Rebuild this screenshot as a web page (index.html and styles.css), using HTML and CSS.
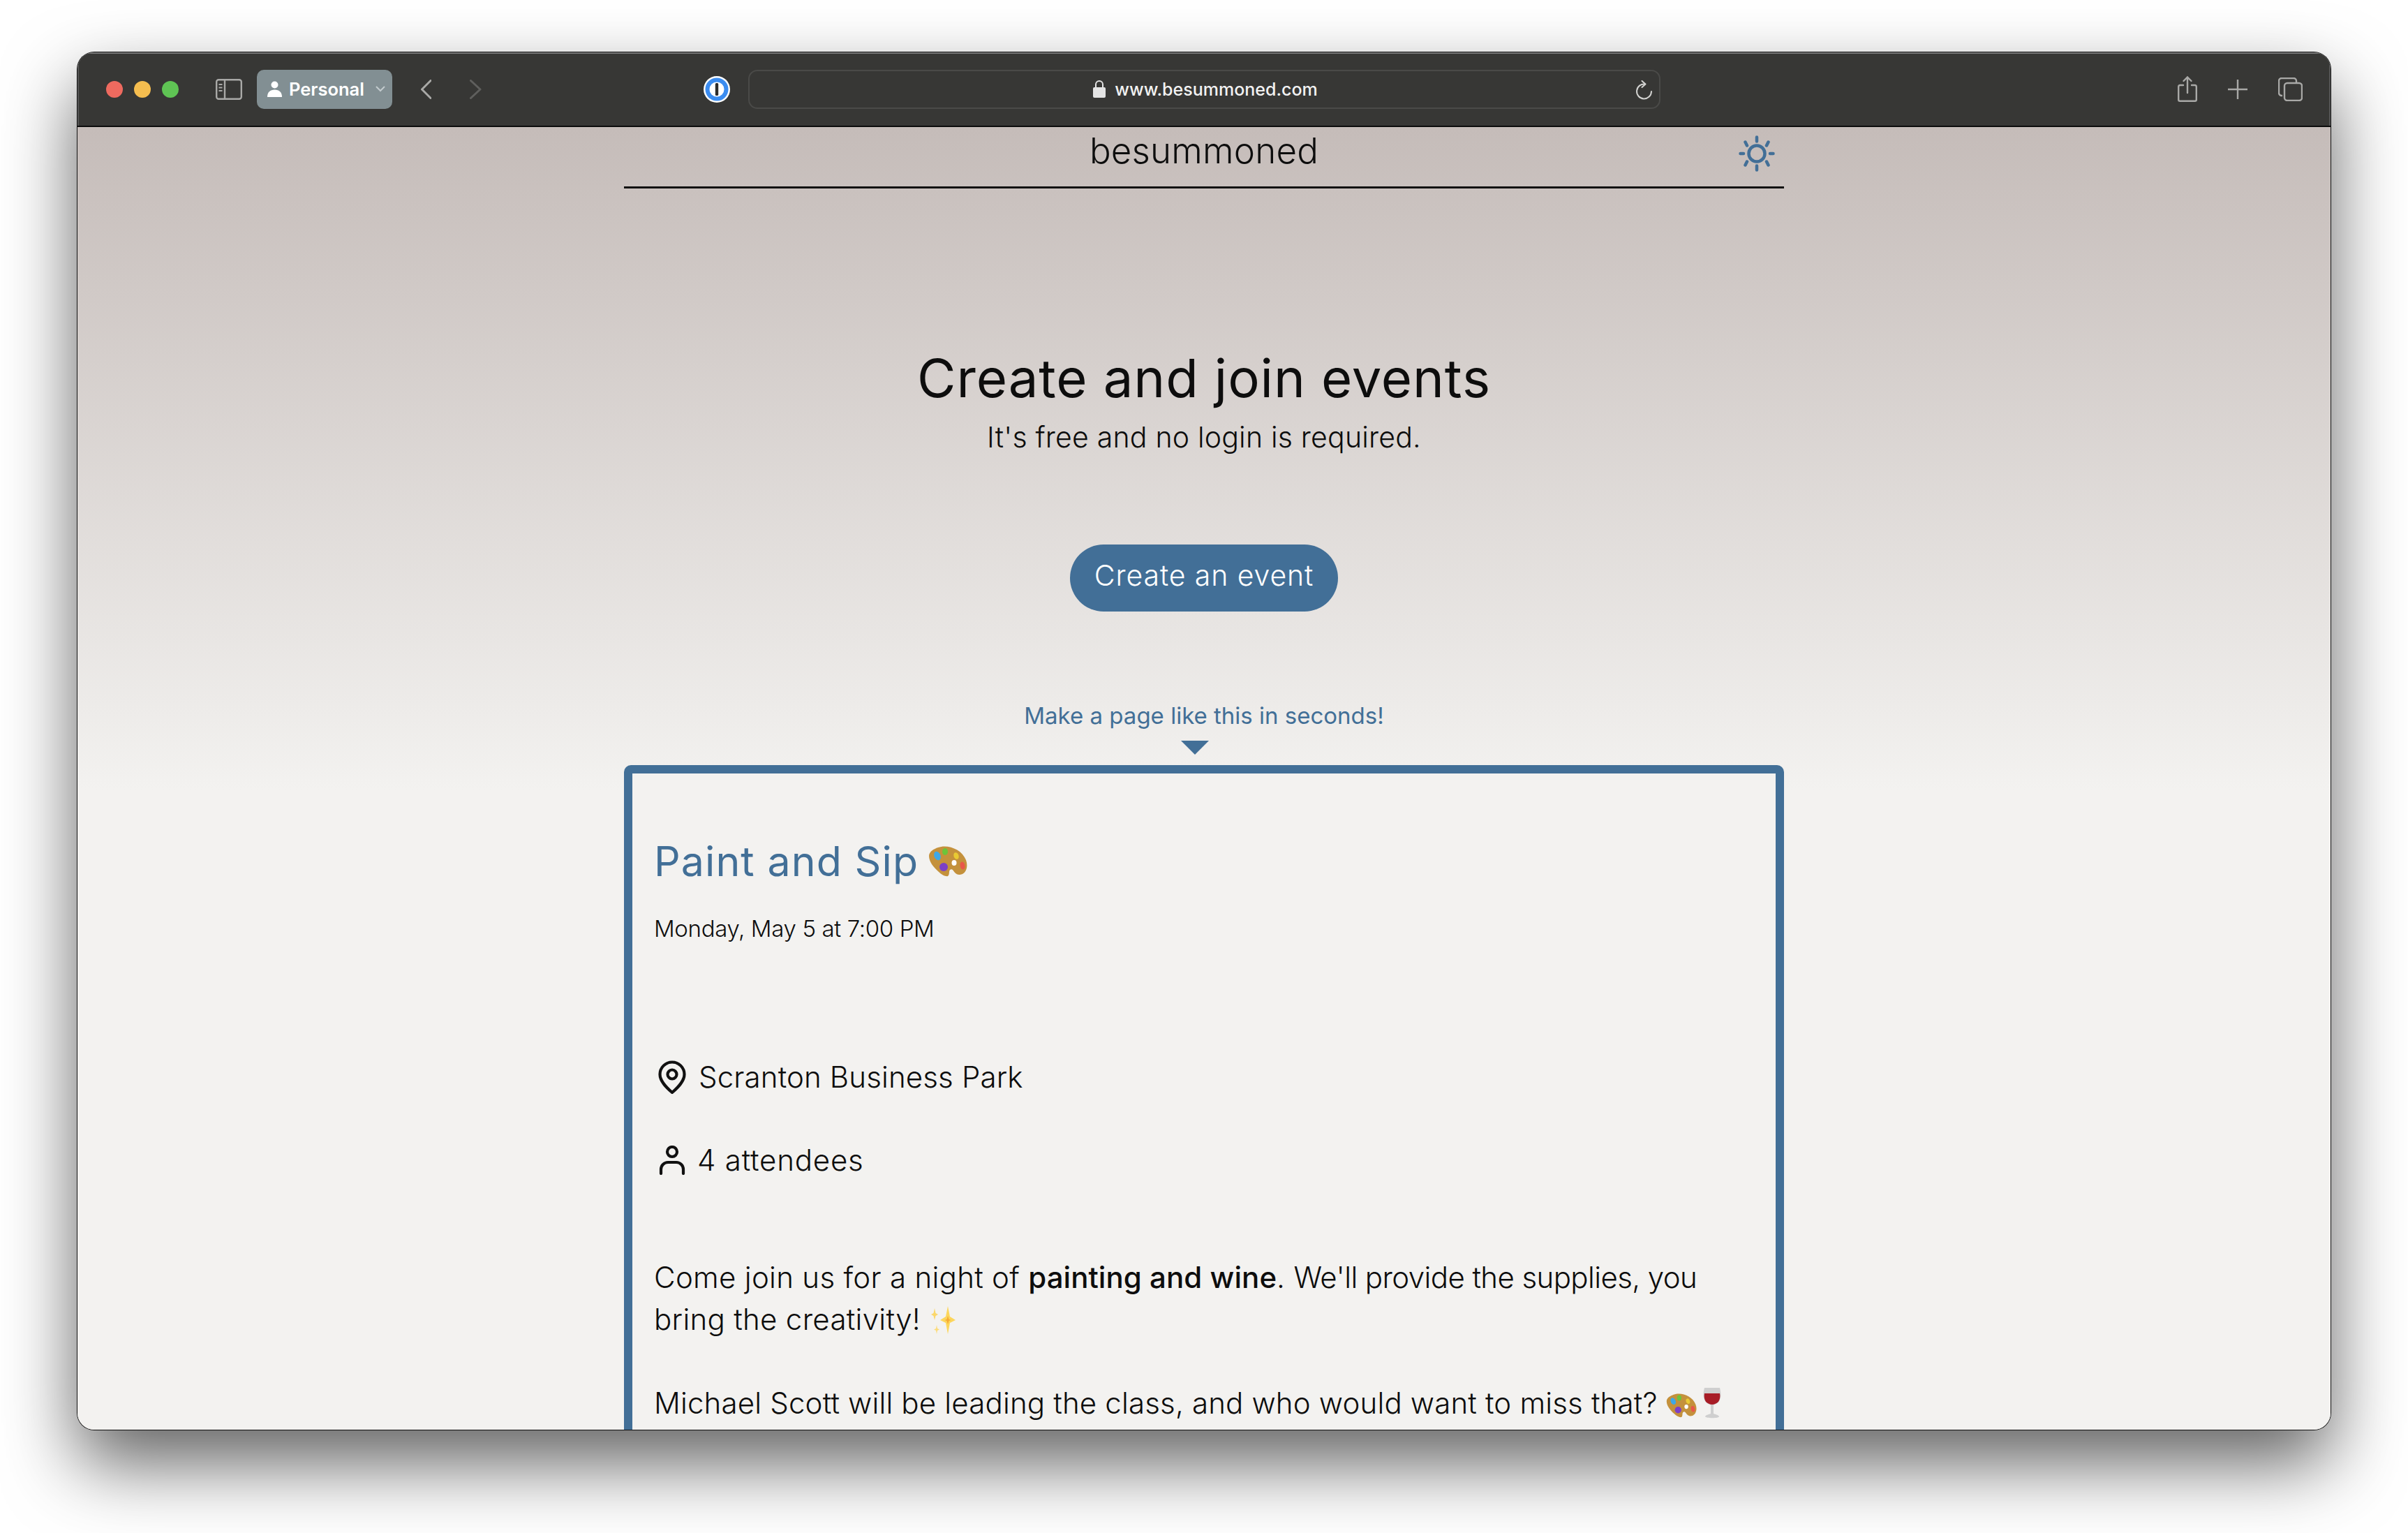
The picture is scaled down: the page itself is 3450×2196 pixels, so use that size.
FILE: index.html
```html
<!DOCTYPE html>
<html lang="en">
<head>
<meta charset="utf-8">
<title>besummoned</title>
<link rel="stylesheet" href="styles.css">
</head>
<body>
<div class="window">
  <div class="toolbar">
    <div class="lights">
      <span class="light red"></span><span class="light yellow"></span><span class="light green"></span>
    </div>
    <svg class="sidebar-icon" width="38" height="30" viewBox="0 0 38 30" fill="none" stroke="#a9a9a7" stroke-width="2.4">
      <rect x="1.2" y="1.2" width="35.6" height="27.6" rx="3"/><path d="M13 1.2v27.6"/>
      <path d="M4.5 8h5M4.5 12.5h5M4.5 17h5" stroke-width="2"/>
    </svg>
    <div class="profile">
      <svg width="21" height="23" viewBox="0 0 21 23" fill="#fff"><circle cx="10.5" cy="5.5" r="5"/><path d="M0 23c0-7 4-10.500 10.500-10.500S21 16 21 23z"/></svg>
      <span class="profile-name">Personal</span>
      <svg width="14" height="9" viewBox="0 0 14 9" fill="none" stroke="#c3cbce" stroke-width="2"><path d="M1 1l6 6 6-6"/></svg>
    </div>
    <svg class="back" width="15" height="28" viewBox="0 0 15 28" fill="none" stroke="#a9a9a7" stroke-width="3" stroke-linecap="round" stroke-linejoin="round"><path d="M14 1.500L1.500 14 14 26.500"/></svg>
    <svg class="forward" width="17" height="28" viewBox="0 0 17 28" fill="none" stroke="#5f5f5d" stroke-width="3" stroke-linecap="round" stroke-linejoin="round"><path d="M1.500 1.500L15 14 1.500 26.500"/></svg>
    <svg class="onepass" width="38" height="38" viewBox="0 0 38 38"><circle cx="19" cy="19" r="19" fill="#fff"/><circle cx="19" cy="19" r="13.500" fill="none" stroke="#3b8cf0" stroke-width="6"/><rect x="16.800" y="10" width="4.400" height="18" rx="1.500" fill="#2b2b2b"/></svg>
    <div class="urlbar">
      <span class="url">
        <svg width="18" height="25" viewBox="0 0 18 25"><path d="M4 11V6a5 5 0 0 1 10 0v5" fill="none" stroke="#e4e4e4" stroke-width="2"/><rect y="10" width="18" height="15" rx="2" fill="#e4e4e4"/></svg>
        <span>www.besummoned.com</span>
      </span>
      <svg class="reload" width="26" height="28" viewBox="0 0 26 28" fill="none" stroke="#d2d2d0" stroke-width="2" stroke-linecap="round"><path d="M15 5.500A10.500 10.500 0 1 0 24 16"/><path d="M10.500 1l5 4.500-5 4.500" stroke-linejoin="round"/></svg>
    </div>
    <div class="tools">
      <svg width="28" height="37" viewBox="0 0 28 37" fill="none" stroke="#a9a9a7" stroke-width="2.400" stroke-linecap="round"><path d="M8 13H3.500A2.300 2.300 0 0 0 1.200 15.300v18.500a2 2 0 0 0 2 2h21.600a2 2 0 0 0 2-2V15.300a2.300 2.300 0 0 0-2.300-2.300H20M14 24V1.500M8.500 7L14 1.500 19.500 7"/></svg>
      <svg width="28" height="28" viewBox="0 0 28 28" fill="none" stroke="#a9a9a7" stroke-width="2.400"><path d="M14 0v28M0 14h28"/></svg>
      <svg width="35" height="34" viewBox="0 0 35 34" fill="none" stroke="#a9a9a7" stroke-width="2.400"><path d="M6 26H5a4 4 0 0 1-4-4V5a4 4 0 0 1 4-4h17a4 4 0 0 1 4 4v2"/><rect x="9" y="8" width="25" height="25" rx="4"/></svg>
    </div>
  </div>
  <main class="page">
    <header class="site-header">
      <span></span>
      <div class="brand">besummoned</div>
      <svg class="sun" width="52" height="52" viewBox="0 0 52 52" fill="none" stroke="#426f97" stroke-width="4.500" stroke-linecap="round">
        <circle cx="26" cy="26" r="11.500"/>
        <path d="M26 2.500v6M26 43.500v6M2.500 26h4.500M45 26h4.500M9.500 9.500l2.500 5M42.500 9.500l-2.500 5M9.500 42.500l2.500-5M42.500 42.500l-2.500-5"/>
      </svg>
    </header>
    <h1 class="hero-title">Create and join events</h1>
    <p class="hero-sub">It's free and no login is required.</p>
    <a class="cta">Create an event</a>
    <p class="demo-note">Make a page like this in seconds!</p>
    <div class="demo-arrow"></div>
    <section class="card">
      <h2 class="event-title">Paint and Sip
        <svg class="emoji palette-lg" viewBox="0 0 56 44" aria-label="palette"><use href="#palette"/></svg>
      </h2>
      <p class="event-date">Monday, May 5 at 7:00 PM</p>
      <div class="meta meta-first">
        <svg class="meta-icon" width="40" height="48" viewBox="0 0 40 48" fill="none" stroke="#111" stroke-width="4.200"><path d="M20 46C12 39 2.500 30 2.500 20a17.500 17.500 0 0 1 35 0C37.500 30 28 39 20 46z" stroke-linejoin="round"/><circle cx="20" cy="20" r="6.500"/></svg>
        <span>Scranton Business Park</span>
      </div>
      <div class="meta">
        <svg class="meta-icon" width="40" height="42" viewBox="0 0 40 42" fill="none" stroke="#111" stroke-width="4.200" stroke-linecap="round"><circle cx="20" cy="9" r="7"/><path d="M4 40v-6a10 10 0 0 1 10-10h12a10 10 0 0 1 10 10v6"/></svg>
        <span class="attendees">4 attendees</span>
      </div>
      <p class="desc">Come join us for a night of <strong>painting and wine</strong>. <span class="tight">We'll provide the supplies, you</span> bring the creativity!
        <svg class="emoji sparkles" viewBox="0 0 42 40" aria-label="sparkles"><path d="M27 0l3 15 8 5-8 4-3 16-3-16-8-4 8-5z" fill="#fcd65c"/><path d="M8 3l1.500 7L13 12l-3.500 2L8 20l-1.500-6L3 12l3.500-2z" fill="#fbd76a"/><path d="M11 27l1 5 3 1.500-3 1.500-1 5-1-5-3-1.500 3-1.500z" fill="#fcdc7c"/><path d="M27 14l1.500 5 3 1-3 1-1.500 5-1.500-5-3-1 3-1z" fill="#f7a933"/></svg>
        <br><br><span class="closing">Michael Scott will be leading the class, and who would want to miss that?</span>
        <svg class="emoji palette-sm" viewBox="0 0 56 44" aria-label="palette"><use href="#palette"/></svg><svg class="emoji wine" viewBox="0 0 28 46" aria-label="wine glass"><path d="M3 1h22c2 8 2 14-1 19-2 3-5 5-8 5.500V38c3 1 7 2 8 4 1 3-20 3-20 0 1-2 5-3 8-4V25.500c-3-.5-6-2.500-8-5.500C1 15 1 9 3 1z" fill="#cfcfcf"/><path d="M3 9h22c1 5 0 9-2 12-2 2-6 4-9 4s-7-2-9-4C3 18 2 14 3 9z" fill="#a81c26"/></svg>
      </p>
    </section>
  </main>
</div>
<svg class="defs" width="0" height="0">
  <defs>
    <g id="palette">
      <path d="M14 2C27-3 48 4 54 20c3 8 1 17-5 20-5 2-8 1-11-2-3-4-4-6-7-4-2 2 0 7-3 9-3 1-9-2-13-6C7 30 1 22 1 14 1 8 8 4 14 2z" fill="#c4913c"/>
      <ellipse cx="13" cy="14" rx="4.500" ry="6.500" fill="#3ea8e6" transform="rotate(-25 13 14)"/>
      <ellipse cx="24" cy="8" rx="4" ry="5" fill="#6cc43a"/>
      <ellipse cx="40" cy="14" rx="3.500" ry="5" fill="#e9ca33" transform="rotate(-20 40 14)"/>
      <ellipse cx="49" cy="28" rx="3.500" ry="5.500" fill="#e8574a" transform="rotate(-10 49 28)"/>
      <ellipse cx="22" cy="30" rx="6" ry="6" fill="#7c3fc6"/>
      <ellipse cx="37" cy="24" rx="3.500" ry="4" fill="#fff"/>
    </g>
  </defs>
</svg>
</body>
</html>
```
FILE: styles.css
```css
* { box-sizing: border-box; }
html, body { margin: 0; background: #fff; }
body { width: 3450px; height: 2196px; padding: 75px 111px 0; overflow: hidden; font-family: "Inter", "Liberation Sans", sans-serif; }
.defs { position: absolute; }
.window { width: 3228px; height: 1973px; border-radius: 24px; overflow: hidden; display: flex; flex-direction: column; box-shadow: 0 0 0 1px #111, 0 48px 105px rgba(0,0,0,.62); background: #f3f2f0; }
.toolbar { height: 107px; flex: none; background: #373735; border-bottom: 2px solid #0c0c0c; box-shadow: inset 0 2px 0 #777, inset 2px 0 0 #555, inset -2px 0 0 #555; display: flex; align-items: center; padding-left: 41px; padding-top: 0; }
.lights { display: flex; gap: 16px; }
.light { width: 24px; height: 24px; border-radius: 50%; }
.red { background: #ee6a5f; }
.yellow { background: #f5bd4f; }
.green { background: #5fc454; }
.sidebar-icon { margin-left: 53px; }
.profile { margin-left: 21px; width: 194px; height: 56px; border-radius: 10px; background: #828f93; display: flex; align-items: center; padding-left: 15px; }
.profile-name { margin-left: 10px; width: 124px; color: #fff; font: 600 25.500px "Inter", sans-serif; }
.back { margin-left: 41px; }
.forward { margin-left: 55px; }
.onepass { margin-left: 318px; }
.urlbar { margin-left: 26px; width: 1307px; height: 56px; border: 2px solid #4a4a48; border-radius: 13px; position: relative; display: flex; align-items: center; justify-content: center; }
.url { display: flex; align-items: center; gap: 13px; margin-left: 3px; color: #f2f2f2; font: 500 25px "Inter", sans-serif; }
.reload { position: absolute; right: 9px; top: 13px; }
.tools { margin-left: 741px; display: flex; align-items: center; gap: 44px; }
.page { flex: 1; min-height: 0; overflow: hidden; display: flex; flex-direction: column; align-items: center; background: linear-gradient(#c5bcb9 0, #f3f2f0 950px, #f3f2f0 100%); color: #0d0d0d; }
.page > * { flex: none; }
.site-header { width: 1662px; height: 88px; border-bottom: 3px solid #111; display: grid; grid-template-columns: 1fr auto 1fr; align-items: start; }
.brand { font-size: 51px; line-height: 60px; font-weight: 300; margin-top: 4px; letter-spacing: .2px; }
.sun { justify-self: end; margin: 12px 13px 0 0; }
.hero-title { margin: 226px 0 0; font-size: 76px; line-height: 90px; font-weight: 400; letter-spacing: .9px; }
.hero-sub { margin: 10px 0 0; font-size: 41px; line-height: 60px; font-weight: 300; letter-spacing: .2px; }
.cta { margin-top: 124px; height: 96px; width: 384px; border-radius: 48px; background: #426f97; color: #fff; font-size: 41px; line-height: 88px; text-align: center; font-weight: 300; letter-spacing: .9px; }
.demo-note { margin: 124px 0 0; font-size: 33px; line-height: 50px; color: #426f97; font-weight: 400; }
.demo-arrow { margin: 11px 26px 0 0; width: 0; height: 0; border-left: 20px solid transparent; border-right: 20px solid transparent; border-top: 20px solid #426f97; }
.card { margin-top: 15px; width: 1662px; height: 1100px; border: 12px solid #426f97; border-radius: 10px; background: #f3f2f0; padding: 86px 31px 0; }
.event-title { margin: 0; font-size: 59px; line-height: 80px; font-weight: 400; color: #426f97; display: flex; align-items: center; gap: 14px; letter-spacing: 1.1px; }
.palette-lg { width: 56px; height: 44px; }
.event-date { margin: 32px 0 0; font-size: 33px; line-height: 48px; font-weight: 300; letter-spacing: -.35px; }
.meta { margin-top: 59px; display: flex; align-items: center; gap: 18px; font-size: 42px; line-height: 60px; font-weight: 300; letter-spacing: .15px; }
.meta-first { margin-top: 159px; }
.meta-icon { flex: none; margin-left: 6px; }
.attendees { letter-spacing: .8px; margin-left: -2px; }
.desc { margin: 108px 0 0; font-size: 42px; line-height: 60px; font-weight: 300; letter-spacing: .3px; }
.desc strong { font-weight: 500; letter-spacing: .05px; }
.tight { letter-spacing: -.6px; }
.closing { letter-spacing: .17px; }
.emoji { display: inline-block; }
.sparkles { width: 42px; height: 40px; vertical-align: -6px; }
.palette-sm { width: 44px; height: 35px; vertical-align: -6px; }
.wine { width: 28px; height: 46px; margin-left: 8px; vertical-align: -8px; }
```
